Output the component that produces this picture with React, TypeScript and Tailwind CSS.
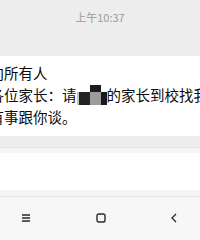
import React from "react"

const cjk = { fontFamily: '"Noto Sans CJK SC", "Noto Sans", sans-serif' }

function Mosaic() {
  return (
    <svg width="30" height="22" viewBox="0 0 30 22" className="inline-block align-top">
      <rect x="13" y="1" width="11" height="7" fill="#1c1c1c" />
      <rect x="0" y="8" width="2" height="13" fill="#c4c4c4" />
      <rect x="2" y="8" width="11" height="13" fill="#232323" />
      <rect x="13" y="8" width="11" height="13" fill="#9c9c9c" />
      <rect x="24" y="8" width="6" height="13" fill="#1a1a1a" />
    </svg>
  )
}

export default function App() {
  return (
    <div className="w-[200px] h-[240px] overflow-hidden bg-[#ededed] flex flex-col" style={cjk}>
      <div className="h-[56px] pt-[9px] text-center text-[11px] leading-[16px] text-[#9b9b9b]">上午10:37</div>

      <div className="bg-white pt-[6px] pb-[8px] whitespace-nowrap text-[14.5px] leading-[22px] text-[#0a0a0a]">
        <div className="ml-[-10.5px]">
          <div>向所有人</div>
          <div>
            各位家长：请<Mosaic />的家长到校找我
          </div>
          <div>有事跟你谈。</div>
        </div>
      </div>

      <div className="h-[11px]" />

      <div className="border-t border-[#e4e4e4] bg-[#f5f5f5] pt-[5px] pb-[6px]">
        <div className="mx-[-4px] h-[37px] rounded-md bg-white" />
      </div>

      <div className="flex-1 border-t border-[#e8e8e8] bg-[#f7f7f7] flex items-center justify-between pl-[21px] pr-[23px] pb-[1px]">
        <svg width="10" height="10" viewBox="0 0 10 10" className="text-[#2a2a2a]">
          <path d="M1 2h8M1 5h8M1 8h8" stroke="currentColor" strokeWidth="1.4" />
        </svg>
        <svg width="10" height="10" viewBox="0 0 10 10" className="text-[#2a2a2a]">
          <rect x="1" y="1" width="8" height="8" rx="1.8" fill="none" stroke="currentColor" strokeWidth="1.4" />
        </svg>
        <svg width="6" height="10" viewBox="0 0 6 10" className="text-[#2a2a2a]">
          <path d="M5 1L1 5l4 4" fill="none" stroke="currentColor" strokeWidth="1.3" />
        </svg>
      </div>
    </div>
  )
}
